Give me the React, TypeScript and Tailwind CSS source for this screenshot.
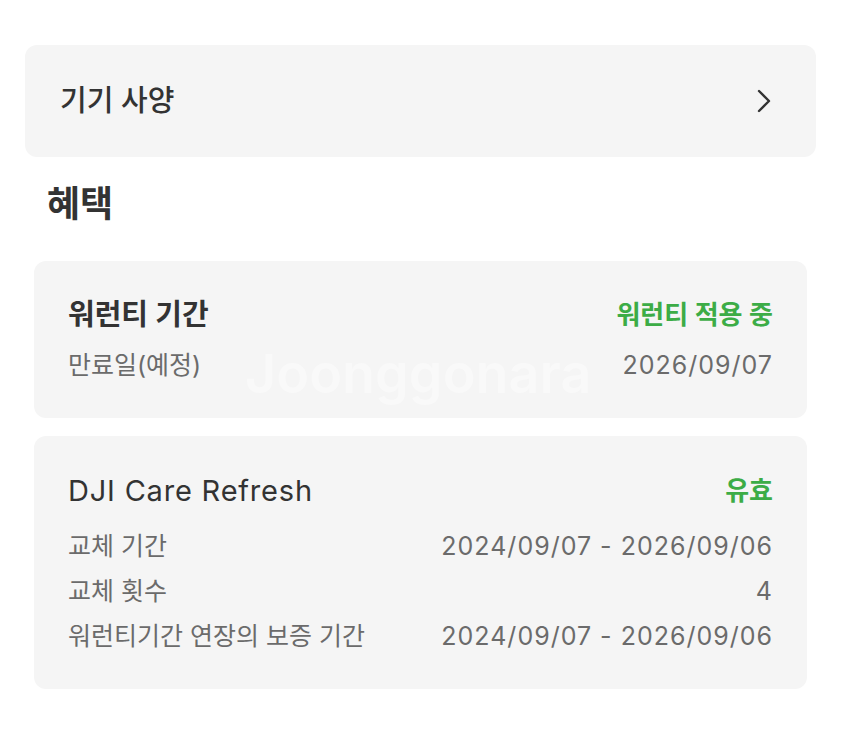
import * as React from "react";

const font = { fontFamily: "Inter, 'Noto Sans CJK KR', sans-serif" };

function InfoRow({ label, value }: { label: string; value: string }) {
    return (
        <div className="flex items-center justify-between text-[25px] leading-[45px] text-[#6b6b6b]">
            <span>{label}</span>
            <span className="tracking-[1px]">{value}</span>
        </div>
    );
}

export default function App() {
    return (
        <div className="min-h-[750px] w-[841px] bg-white pt-[45px]" style={font}>
            {/* Device specs link */}
            <div className="mx-[25px] flex h-[112px] items-center justify-between rounded-[12px] bg-[#f5f5f5] pl-[35px] pr-[44px]">
                <span className="text-[29px] font-medium text-[#333]">기기 사양</span>
                <svg width="16" height="26" viewBox="0 0 16 26" fill="none">
                    <path d="M3 3 L13 13 L3 23" stroke="#333" strokeWidth="2.4" strokeLinecap="round" strokeLinejoin="round" />
                </svg>
            </div>

            <h2 className="ml-[47px] mt-[24px] mb-[34px] text-[36px] font-bold leading-[46px] text-[#333]">혜택</h2>

            <div className="mx-[34px] flex flex-col gap-[18px]">
                {/* Warranty */}
                <div className="relative overflow-hidden rounded-[12px] bg-[#f5f5f5] px-[34px] pt-[37px] pb-[36px]">
                    <div className="flex items-center justify-between leading-[34px]">
                        <span className="text-[29px] font-semibold text-[#333]">워런티 기간</span>
                        <span className="text-[26px] font-semibold text-[#3cac46]">워런티 적용 중</span>
                    </div>
                    <div className="mt-4 flex items-center justify-between text-[25px] leading-[34px] text-[#6b6b6b]">
                        <span>만료일(예정)</span>
                        <span className="tracking-[1px]">2026/09/07</span>
                    </div>
                    {/* watermark */}
                    <span className="pointer-events-none absolute left-[211px] top-[72px] text-[54px] font-semibold text-white/40">
                        Joonggonara
                    </span>
                </div>

                {/* DJI Care Refresh */}
                <div className="rounded-[12px] bg-[#f5f5f5] px-[34px] pt-[37px] pb-[30px]">
                    <div className="flex items-center justify-between leading-[36px]">
                        <span className="text-[29px] tracking-[0.8px] text-[#333]">DJI Care Refresh</span>
                        <span className="text-[26px] font-semibold text-[#3cac46]">유효</span>
                    </div>
                    <div className="mt-[15px]">
                        <InfoRow label="교체 기간" value="2024/09/07 - 2026/09/06" />
                        <InfoRow label="교체 횟수" value="4" />
                        <InfoRow label="워런티기간 연장의 보증 기간" value="2024/09/07 - 2026/09/06" />
                    </div>
                </div>
            </div>
        </div>
    );
}
